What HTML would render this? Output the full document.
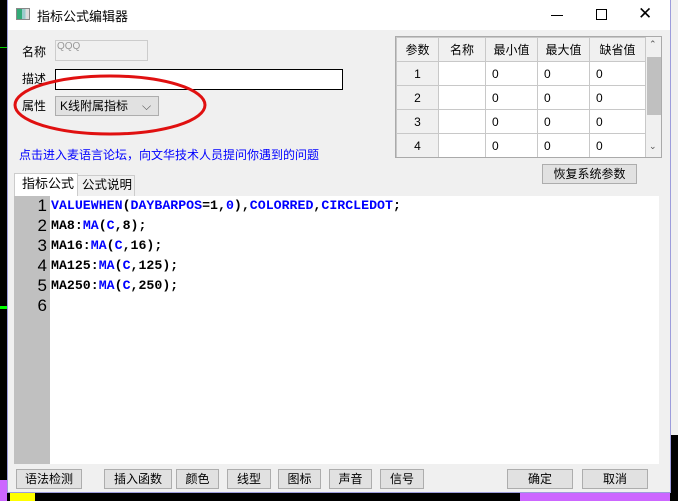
<!DOCTYPE html>
<html><head><meta charset="utf-8"><style>
*{margin:0;padding:0;box-sizing:border-box}
body{width:678px;height:501px;background:#000;position:relative;overflow:hidden;font-family:"Liberation Sans","Noto Sans CJK SC",sans-serif;font-size:12px;color:#000}
.a{position:absolute}
.btn{position:absolute;background:#e1e1e1;border:1px solid #adadad;text-align:center;font-size:12px;line-height:18px;height:20px;top:469px}
table{border-collapse:collapse}
td{border:1px solid #c8c8c8;height:24px;font-size:12px;padding-left:6px;background:#fff}
td.h{background:#f0f0f0;text-align:center;padding:0}
.code{font-family:"Liberation Mono","DejaVu Sans Mono",monospace;font-weight:bold;font-size:13.25px;line-height:20px;white-space:pre}
.b{color:#0000ff}
</style></head><body>
<div class="a" style="left:671px;top:0;width:7px;height:435px;background:#f0f0f0"></div>
<div class="a" style="left:0;top:47px;width:7px;height:1px;background:#0c0"></div>
<div class="a" style="left:0;top:306px;width:7px;height:3px;background:#0f0"></div>
<div class="a" style="left:0;top:480px;width:7px;height:21px;background:#c6f"></div>
<div class="a" style="left:10px;top:492px;width:25px;height:9px;background:#ff0"></div>
<div class="a" style="left:520px;top:492px;width:150px;height:9px;background:#c6f"></div>
<div class="a" style="left:7px;top:0;width:664px;height:493px;background:#f0f0f0;border:1px solid #9c9cdc"></div>
<div class="a" style="left:8px;top:0;width:662px;height:30px;background:#fff"></div>
<div class="a" style="left:16px;top:8px;width:14px;height:12px;border:1px solid #888;background:linear-gradient(90deg,#3a7 0 40%,#9cc 40% 70%,#ddd 70%)"></div>
<div class="a" style="left:37px;top:6px;font-size:13px">指标公式编辑器</div>
<div class="a" style="left:551px;top:15px;width:12px;height:1px;background:#000"></div>
<div class="a" style="left:596px;top:9px;width:11px;height:11px;border:1px solid #000"></div>
<div class="a" style="left:638px;top:4px;font-size:17px;line-height:20px">✕</div>

<div class="a" style="left:22px;top:43px">名称</div>
<div class="a" style="left:55px;top:40px;width:93px;height:21px;border:1px solid #ccc;background:#f0f0f0;color:#999;font-size:10px;padding-left:1px">QQQ</div>
<div class="a" style="left:22px;top:70px">描述</div>
<div class="a" style="left:55px;top:69px;width:288px;height:21px;border:1px solid #000;background:#fff"></div>
<div class="a" style="left:22px;top:97px">属性</div>
<div class="a" style="left:55px;top:96px;width:104px;height:20px;border:1px solid #adadad;background:#e1e1e1;padding-left:4px;line-height:18px">K线附属指标<span style="position:absolute;left:86px;top:0;color:#555">⌵</span></div>
<svg class="a" style="left:12px;top:72px" width="196" height="66"><ellipse cx="98" cy="33" rx="95" ry="29" fill="none" stroke="#e01010" stroke-width="3"/></svg>
<div class="a" style="left:19px;top:146px;color:#0000ff">点击进入麦语言论坛，向文华技术人员提问你遇到的问题</div>

<div class="a" style="left:395px;top:36px;width:267px;height:122px;border:1px solid #aaa;background:#fff;overflow:hidden">
<table style="width:250px">
<tr><td class="h" style="width:42px">参数</td><td class="h" style="width:47px">名称</td><td class="h" style="width:52px">最小值</td><td class="h" style="width:52px">最大值</td><td class="h">缺省值</td></tr>
<tr><td class="h">1</td><td></td><td>0</td><td>0</td><td>0</td></tr>
<tr><td class="h">2</td><td></td><td>0</td><td>0</td><td>0</td></tr>
<tr><td class="h">3</td><td></td><td>0</td><td>0</td><td>0</td></tr>
<tr><td class="h">4</td><td></td><td>0</td><td>0</td><td>0</td></tr>
<tr><td class="h">5</td><td></td><td></td><td></td><td></td></tr>
</table>
<div class="a" style="left:250px;top:0;width:16px;height:121px;background:#f0f0f0"></div>
<div class="a" style="left:251px;top:20px;width:15px;height:58px;background:#c0c0c0"></div>
<div class="a" style="left:253px;top:2px;font-size:9px;color:#555">⌃</div>
<div class="a" style="left:253px;top:104px;font-size:9px;color:#555">⌄</div>
</div>
<div class="btn" style="left:542px;top:164px;width:95px">恢复系统参数</div>

<div class="a" style="left:14px;top:173px;width:64px;height:23px;background:#fff;border:1px solid #ccc;border-bottom:none;padding-left:7px;line-height:20px;font-size:13px;z-index:2">指标公式</div>
<div class="a" style="left:77px;top:175px;width:58px;height:21px;border:1px solid #ccc;border-bottom:none;padding-left:4px;line-height:18px;font-size:12.5px;white-space:nowrap">公式说明</div>

<div class="a" style="left:14px;top:196px;width:36px;height:268px;background:#c0c0c0"></div>
<div class="a" style="left:50px;top:196px;width:609px;height:268px;background:#fff"></div>
<div class="a" style="left:30px;top:196px;font-family:'Liberation Sans',sans-serif;font-size:17px;line-height:20px;text-align:right;width:17px">1<br>2<br>3<br>4<br>5<br>6</div>
<div class="a code" style="left:51px;top:196px"><span class="b">VALUEWHEN</span>(<span class="b">DAYBARPOS</span>=1,<span class="b">0</span>),<span class="b">COLORRED</span>,<span class="b">CIRCLEDOT</span>;
MA8:<span class="b">MA</span>(<span class="b">C</span>,8);
MA16:<span class="b">MA</span>(<span class="b">C</span>,16);
MA125:<span class="b">MA</span>(<span class="b">C</span>,125);
MA250:<span class="b">MA</span>(<span class="b">C</span>,250);</div>

<div class="btn" style="left:16px;width:66px">语法检测</div>
<div class="btn" style="left:104px;width:68px">插入函数</div>
<div class="btn" style="left:176px;width:43px">颜色</div>
<div class="btn" style="left:227px;width:44px">线型</div>
<div class="btn" style="left:278px;width:43px">图标</div>
<div class="btn" style="left:329px;width:43px">声音</div>
<div class="btn" style="left:380px;width:44px">信号</div>
<div class="btn" style="left:507px;width:66px">确定</div>
<div class="btn" style="left:582px;width:66px">取消</div>
</body></html>
